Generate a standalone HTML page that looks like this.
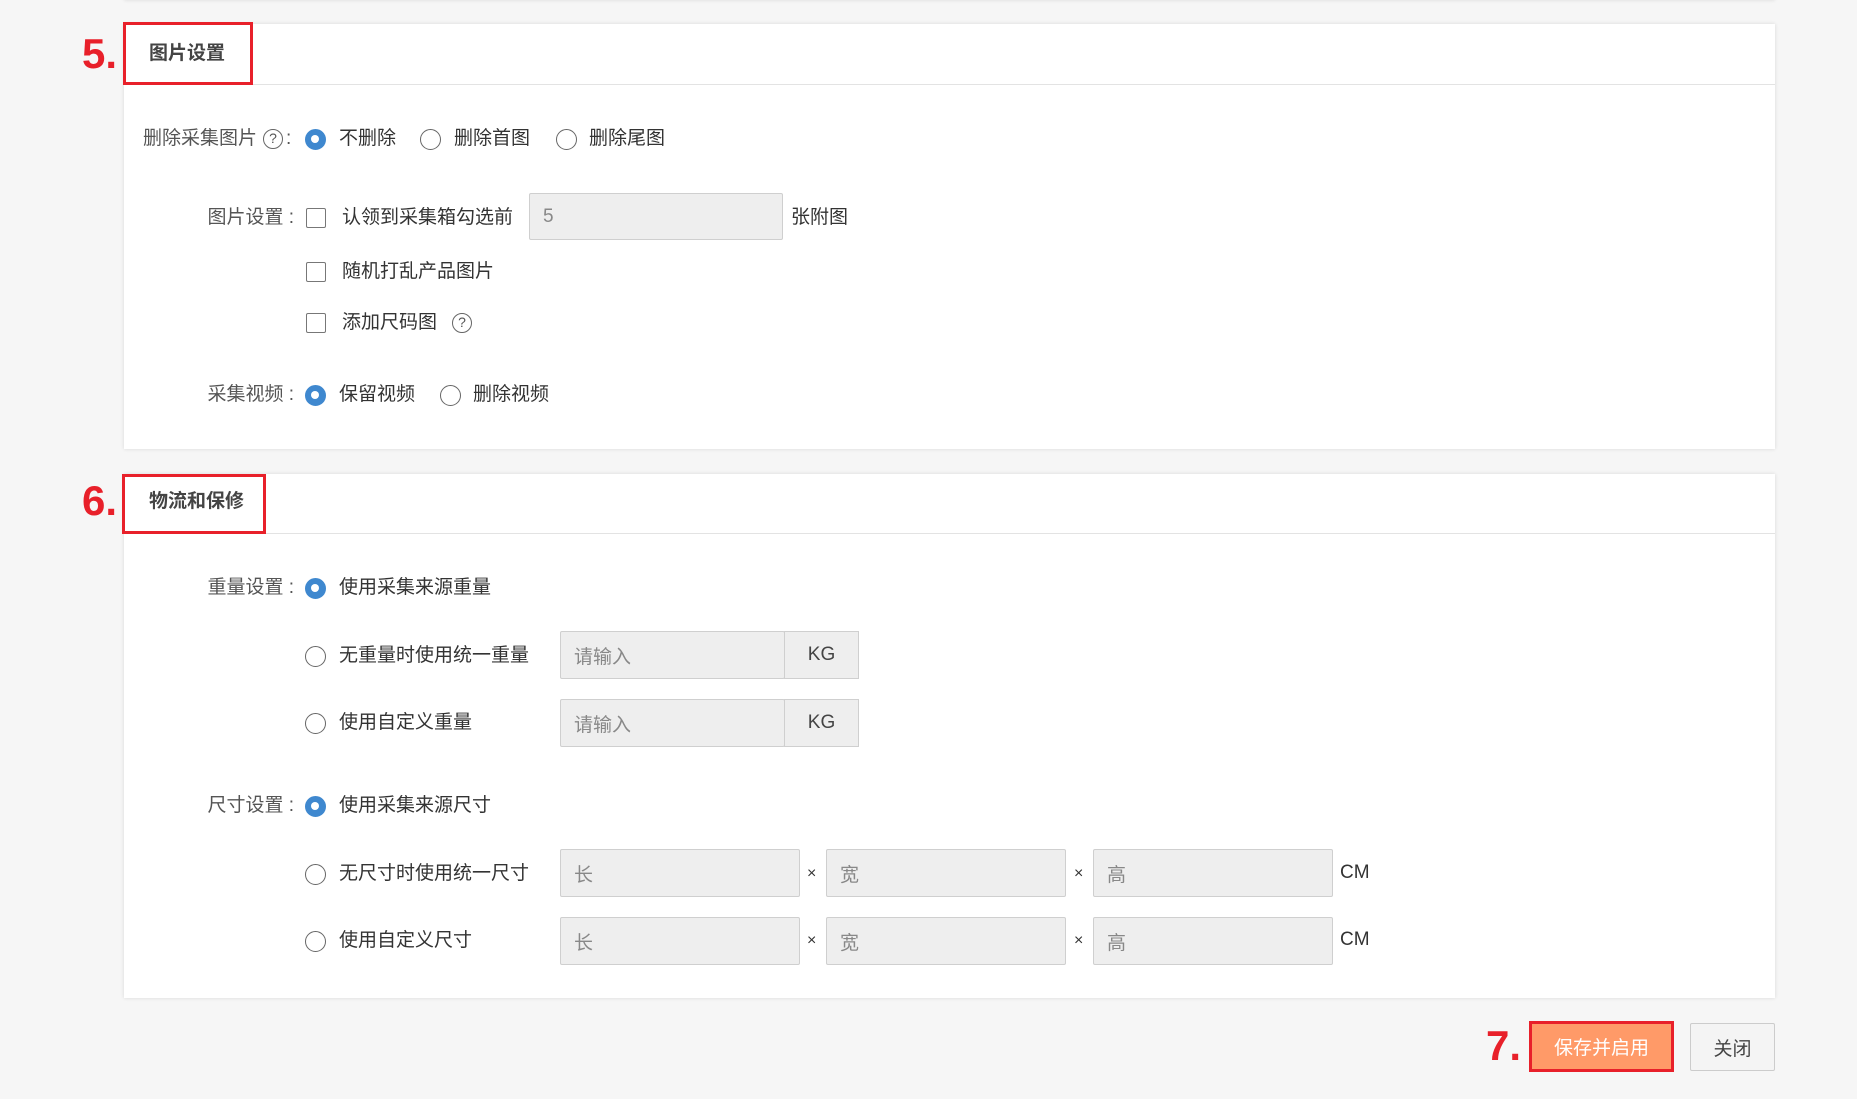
<!DOCTYPE html>
<html><head><meta charset="utf-8"><style>
*{margin:0;padding:0;box-sizing:border-box}
body{width:1857px;height:1099px;background:#f6f6f6;position:relative;overflow:hidden;font-family:"Liberation Sans","Noto Sans CJK SC",sans-serif;color:#333}
.a{position:absolute}
.panel{position:absolute;background:#fff;box-shadow:0 0 4px rgba(0,0,0,.12)}
.hline{position:absolute;height:1px;background:#e3e3e3}
.t{position:absolute;font-size:19px;line-height:24px;white-space:nowrap;color:#333;margin-top:2px}
.l{position:absolute;font-size:19px;line-height:24px;white-space:nowrap;color:#555;text-align:right;width:200px;margin-top:2px;margin-left:-2px}
.r{position:absolute;width:21px;height:21px;border:1.5px solid #666;border-radius:50%;background:#fff;margin-top:2px}
.r.on{background:#3f88cf;border-color:#3f88cf}
.r.on:after{content:"";position:absolute;left:5px;top:5px;width:8px;height:8px;border-radius:50%;background:#fff}
.c{position:absolute;width:20px;height:20px;border:1.5px solid #777;border-radius:2px;background:#fff;margin-top:2px}
.in{position:absolute;background:#eeeeee;border:1px solid #cfcfcf;border-radius:2px;font-size:19px;color:#888;padding-left:13px;display:flex;align-items:center}
.add{position:absolute;background:#eeeeee;border:1px solid #cfcfcf;font-size:19px;color:#444;display:flex;align-items:center;justify-content:center}
.red{position:absolute;border:3px solid #e8202a}
.num{position:absolute;color:#e8202a;font-weight:bold;font-size:42px;line-height:44px}
.h{position:absolute;font-size:19px;font-weight:bold;color:#444;line-height:24px}
.q{position:absolute;width:20px;height:20px;border:1.5px solid #666;border-radius:50%;font-size:14px;line-height:17px;text-align:center;color:#555;margin-top:2px}
</style></head><body>
<div class="panel" style="left:124px;top:-20px;width:1651px;height:20px"></div>

<div class="panel" style="left:124px;top:24px;width:1651px;height:425px"></div>
<div class="hline" style="left:124px;top:84px;width:1651px"></div>
<div class="red" style="left:123px;top:22px;width:130px;height:63px"></div>
<div class="num" style="left:82px;top:32px">5.</div>
<div class="h" style="left:149px;top:42px">图片设置</div>

<div class="t" style="left:143px;top:125px;color:#555">删除采集图片</div>
<div class="q" style="left:263px;top:127px">?</div>
<div class="t" style="left:286px;top:125px;color:#555">:</div>
<div class="r on" style="left:305px;top:127px"></div>
<div class="t" style="left:339px;top:125px">不删除</div>
<div class="r" style="left:420px;top:127px"></div>
<div class="t" style="left:454px;top:125px">删除首图</div>
<div class="r" style="left:556px;top:127px"></div>
<div class="t" style="left:589px;top:125px">删除尾图</div>

<div class="l" style="left:96px;top:204px">图片设置 :</div>
<div class="c" style="left:306px;top:206px"></div>
<div class="t" style="left:342px;top:204px">认领到采集箱勾选前</div>
<div class="in" style="left:529px;top:193px;width:254px;height:47px">5</div>
<div class="t" style="left:791px;top:204px">张附图</div>

<div class="c" style="left:306px;top:260px"></div>
<div class="t" style="left:342px;top:258px">随机打乱产品图片</div>
<div class="c" style="left:306px;top:311px"></div>
<div class="t" style="left:342px;top:309px">添加尺码图</div>
<div class="q" style="left:452px;top:311px">?</div>

<div class="l" style="left:96px;top:381px">采集视频 :</div>
<div class="r on" style="left:305px;top:383px"></div>
<div class="t" style="left:339px;top:381px">保留视频</div>
<div class="r" style="left:440px;top:383px"></div>
<div class="t" style="left:473px;top:381px">删除视频</div>

<div class="panel" style="left:124px;top:474px;width:1651px;height:524px"></div>
<div class="hline" style="left:124px;top:533px;width:1651px"></div>
<div class="red" style="left:122px;top:474px;width:144px;height:60px"></div>
<div class="num" style="left:82px;top:479px">6.</div>
<div class="h" style="left:149px;top:490px">物流和保修</div>

<div class="l" style="left:96px;top:574px">重量设置 :</div>
<div class="r on" style="left:305px;top:576px"></div>
<div class="t" style="left:339px;top:574px">使用采集来源重量</div>

<div class="r" style="left:305px;top:644px"></div>
<div class="t" style="left:339px;top:642px">无重量时使用统一重量</div>
<div class="in" style="left:560px;top:631px;width:225px;height:48px">请输入</div>
<div class="add" style="left:784px;top:631px;width:75px;height:48px">KG</div>

<div class="r" style="left:305px;top:711px"></div>
<div class="t" style="left:339px;top:709px">使用自定义重量</div>
<div class="in" style="left:560px;top:699px;width:225px;height:48px">请输入</div>
<div class="add" style="left:784px;top:699px;width:75px;height:48px">KG</div>

<div class="l" style="left:96px;top:792px">尺寸设置 :</div>
<div class="r on" style="left:305px;top:794px"></div>
<div class="t" style="left:339px;top:792px">使用采集来源尺寸</div>

<div class="r" style="left:305px;top:862px"></div>
<div class="t" style="left:339px;top:860px">无尺寸时使用统一尺寸</div>
<div class="in" style="left:560px;top:849px;width:240px;height:48px">长</div>
<div class="t" style="left:807px;top:860px;font-size:16px">×</div>
<div class="in" style="left:826px;top:849px;width:240px;height:48px">宽</div>
<div class="t" style="left:1074px;top:860px;font-size:16px">×</div>
<div class="in" style="left:1093px;top:849px;width:240px;height:48px">高</div>
<div class="t" style="left:1340px;top:859px">CM</div>

<div class="r" style="left:305px;top:929px"></div>
<div class="t" style="left:339px;top:927px">使用自定义尺寸</div>
<div class="in" style="left:560px;top:917px;width:240px;height:48px">长</div>
<div class="t" style="left:807px;top:927px;font-size:16px">×</div>
<div class="in" style="left:826px;top:917px;width:240px;height:48px">宽</div>
<div class="t" style="left:1074px;top:927px;font-size:16px">×</div>
<div class="in" style="left:1093px;top:917px;width:240px;height:48px">高</div>
<div class="t" style="left:1340px;top:926px">CM</div>

<div class="num" style="left:1486px;top:1024px">7.</div>
<div class="a" style="left:1529px;top:1021px;width:145px;height:51px;background:#ff9a68;border:3px solid #e8202a;color:#fff;font-size:19px;display:flex;align-items:center;justify-content:center">保存并启用</div>
<div class="a" style="left:1690px;top:1023px;width:85px;height:48px;background:#f4f4f4;border:1px solid #ccc;border-radius:2px;color:#444;font-size:19px;display:flex;align-items:center;justify-content:center">关闭</div>
</body></html>
